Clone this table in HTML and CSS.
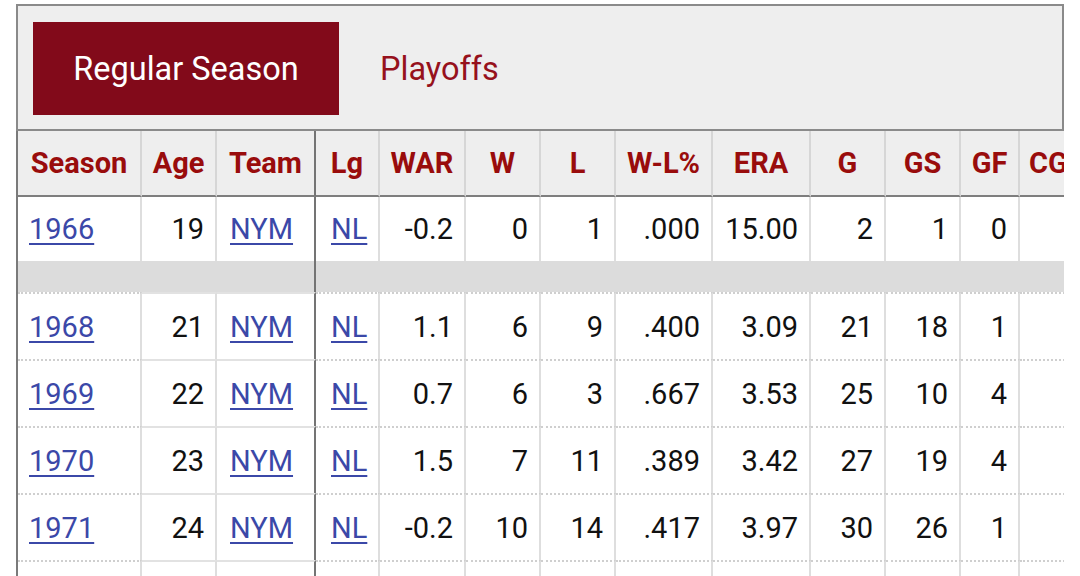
FILE: index.html
```html
<!DOCTYPE html>
<html lang="en">
<head>
<meta charset="utf-8">
<title>Pitching - Regular Season</title>
<link rel="stylesheet" href="styles.css">
</head>
<body>
<div class="wrap">
  <div class="tabs">
    <div class="tab active">Regular Season</div>
    <div class="tab">Playoffs</div>
  </div>
  <div class="tablewrap">
    <table class="stats">
      <colgroup>
        <col class="c-season"><col class="c-age"><col class="c-team"><col class="c-lg"><col class="c-war"><col class="c-w"><col class="c-l"><col class="c-wlp"><col class="c-era"><col class="c-g"><col class="c-gs"><col class="c-gf"><col class="c-cg">
      </colgroup>
      <thead>
        <tr>
          <th>Season</th><th>Age</th><th class="split">Team</th><th>Lg</th><th>WAR</th><th>W</th><th>L</th><th>W-L%</th><th>ERA</th><th>G</th><th>GS</th><th>GF</th><th class="cg">CG</th>
        </tr>
      </thead>
      <tbody>
        <tr class="first">
          <td class="l"><a href="#">1966</a></td><td class="fz">19</td><td class="l fz split"><a href="#">NYM</a></td><td class="l"><a href="#">NL</a></td><td>-0.2</td><td>0</td><td>1</td><td>.000</td><td>15.00</td><td>2</td><td>1</td><td>0</td><td></td>
        </tr>
        <tr class="gap">
          <td></td><td class="fz"></td><td class="fz split"></td><td></td><td></td><td></td><td></td><td></td><td></td><td></td><td></td><td></td><td></td>
        </tr>
        <tr>
          <td class="l"><a href="#">1968</a></td><td class="fz">21</td><td class="l fz split"><a href="#">NYM</a></td><td class="l"><a href="#">NL</a></td><td>1.1</td><td>6</td><td>9</td><td>.400</td><td>3.09</td><td>21</td><td>18</td><td>1</td><td></td>
        </tr>
        <tr>
          <td class="l"><a href="#">1969</a></td><td class="fz">22</td><td class="l fz split"><a href="#">NYM</a></td><td class="l"><a href="#">NL</a></td><td>0.7</td><td>6</td><td>3</td><td>.667</td><td>3.53</td><td>25</td><td>10</td><td>4</td><td></td>
        </tr>
        <tr>
          <td class="l"><a href="#">1970</a></td><td class="fz">23</td><td class="l fz split"><a href="#">NYM</a></td><td class="l"><a href="#">NL</a></td><td>1.5</td><td>7</td><td>11</td><td>.389</td><td>3.42</td><td>27</td><td>19</td><td>4</td><td></td>
        </tr>
        <tr>
          <td class="l"><a href="#">1971</a></td><td class="fz">24</td><td class="l fz split"><a href="#">NYM</a></td><td class="l"><a href="#">NL</a></td><td>-0.2</td><td>10</td><td>14</td><td>.417</td><td>3.97</td><td>30</td><td>26</td><td>1</td><td></td>
        </tr>
        <tr>
          <td class="l"></td><td class="fz"></td><td class="l fz split"></td><td class="l"></td><td></td><td></td><td></td><td></td><td></td><td></td><td></td><td></td><td></td>
        </tr>
      </tbody>
    </table>
  </div>
</div>
</body>
</html>
```

FILE: styles.css
```css
html, body {
  margin: 0;
  padding: 0;
  background: #ffffff;
}

body {
  font-family: Roboto, "Liberation Sans", Arial, sans-serif;
  color: #111111;
}

.wrap {
  margin: 4px 0 0 16px;
  width: 1048px;
  height: 572px;
  overflow: hidden;
}

.tabs {
  display: flex;
  align-items: stretch;
  height: 93px;
  padding: 16px 0 14px 15px;
  background: #eeeeee;
  border: 2px solid #8a8a8a;
}

.tab {
  display: flex;
  align-items: center;
  padding: 0 41px;
  font-size: 32.5px;
  color: #96111c;
}

.tab.active {
  width: 306px;
  box-sizing: border-box;
  justify-content: center;
  padding: 0;
  background: #820a1a;
  color: #ffffff;
}

.tablewrap {
  border-left: 2px solid #7a7a7a;
  overflow: hidden;
  width: 1046px;
}

.stats {
  table-layout: fixed;
  border-collapse: separate;
  border-spacing: 0;
  width: 1130px;
  font-size: 29px;
}

.c-season { width: 124px; }
.c-age { width: 75px; }
.c-team { width: 99px; }
.c-lg { width: 64px; }
.c-war { width: 86px; }
.c-w { width: 75px; }
.c-l { width: 75px; }
.c-wlp { width: 97px; }
.c-era { width: 98px; }
.c-g { width: 75px; }
.c-gs { width: 75px; }
.c-gf { width: 59px; }
.c-cg { width: 128px; }

.stats th {
  height: 66px;
  padding: 0;
  box-sizing: border-box;
  background: #eeeeee;
  color: #990c0c;
  font-weight: 700;
  text-align: center;
  border-right: 2px solid #d6d6d6;
  border-bottom: 2px solid #7e7e7e;
  white-space: nowrap;
  overflow: hidden;
}

.stats th.cg {
  text-align: left;
  padding-left: 9px;
}

.stats td {
  height: 67px;
  box-sizing: border-box;
  padding: 0 11px;
  text-align: right;
  white-space: nowrap;
  border-right: 2px solid #dedede;
  border-top: 2px dotted #cfcfcf;
}

.stats td.fz {
  border-top: 2px solid #e2e2e2;
}

.stats td.l {
  text-align: left;
}

.stats .split {
  border-right: 2px solid #747474;
}

.stats td.split.l {
  padding-left: 13px;
}

.stats td.l + td.l {
  padding-left: 15px;
}

.stats tr.first td {
  border-top: none;
  height: 64px;
}

.stats tr.gap td {
  height: 31px;
  background: #dcdcdc;
  border-right-color: #dcdcdc;
  border-top: none;
}

.stats tr.gap td.split {
  border-right-color: #747474;
}

.stats a {
  color: #3b48a8;
  text-decoration: underline;
  text-decoration-thickness: 2px;
  text-underline-offset: 4px;
}
```
